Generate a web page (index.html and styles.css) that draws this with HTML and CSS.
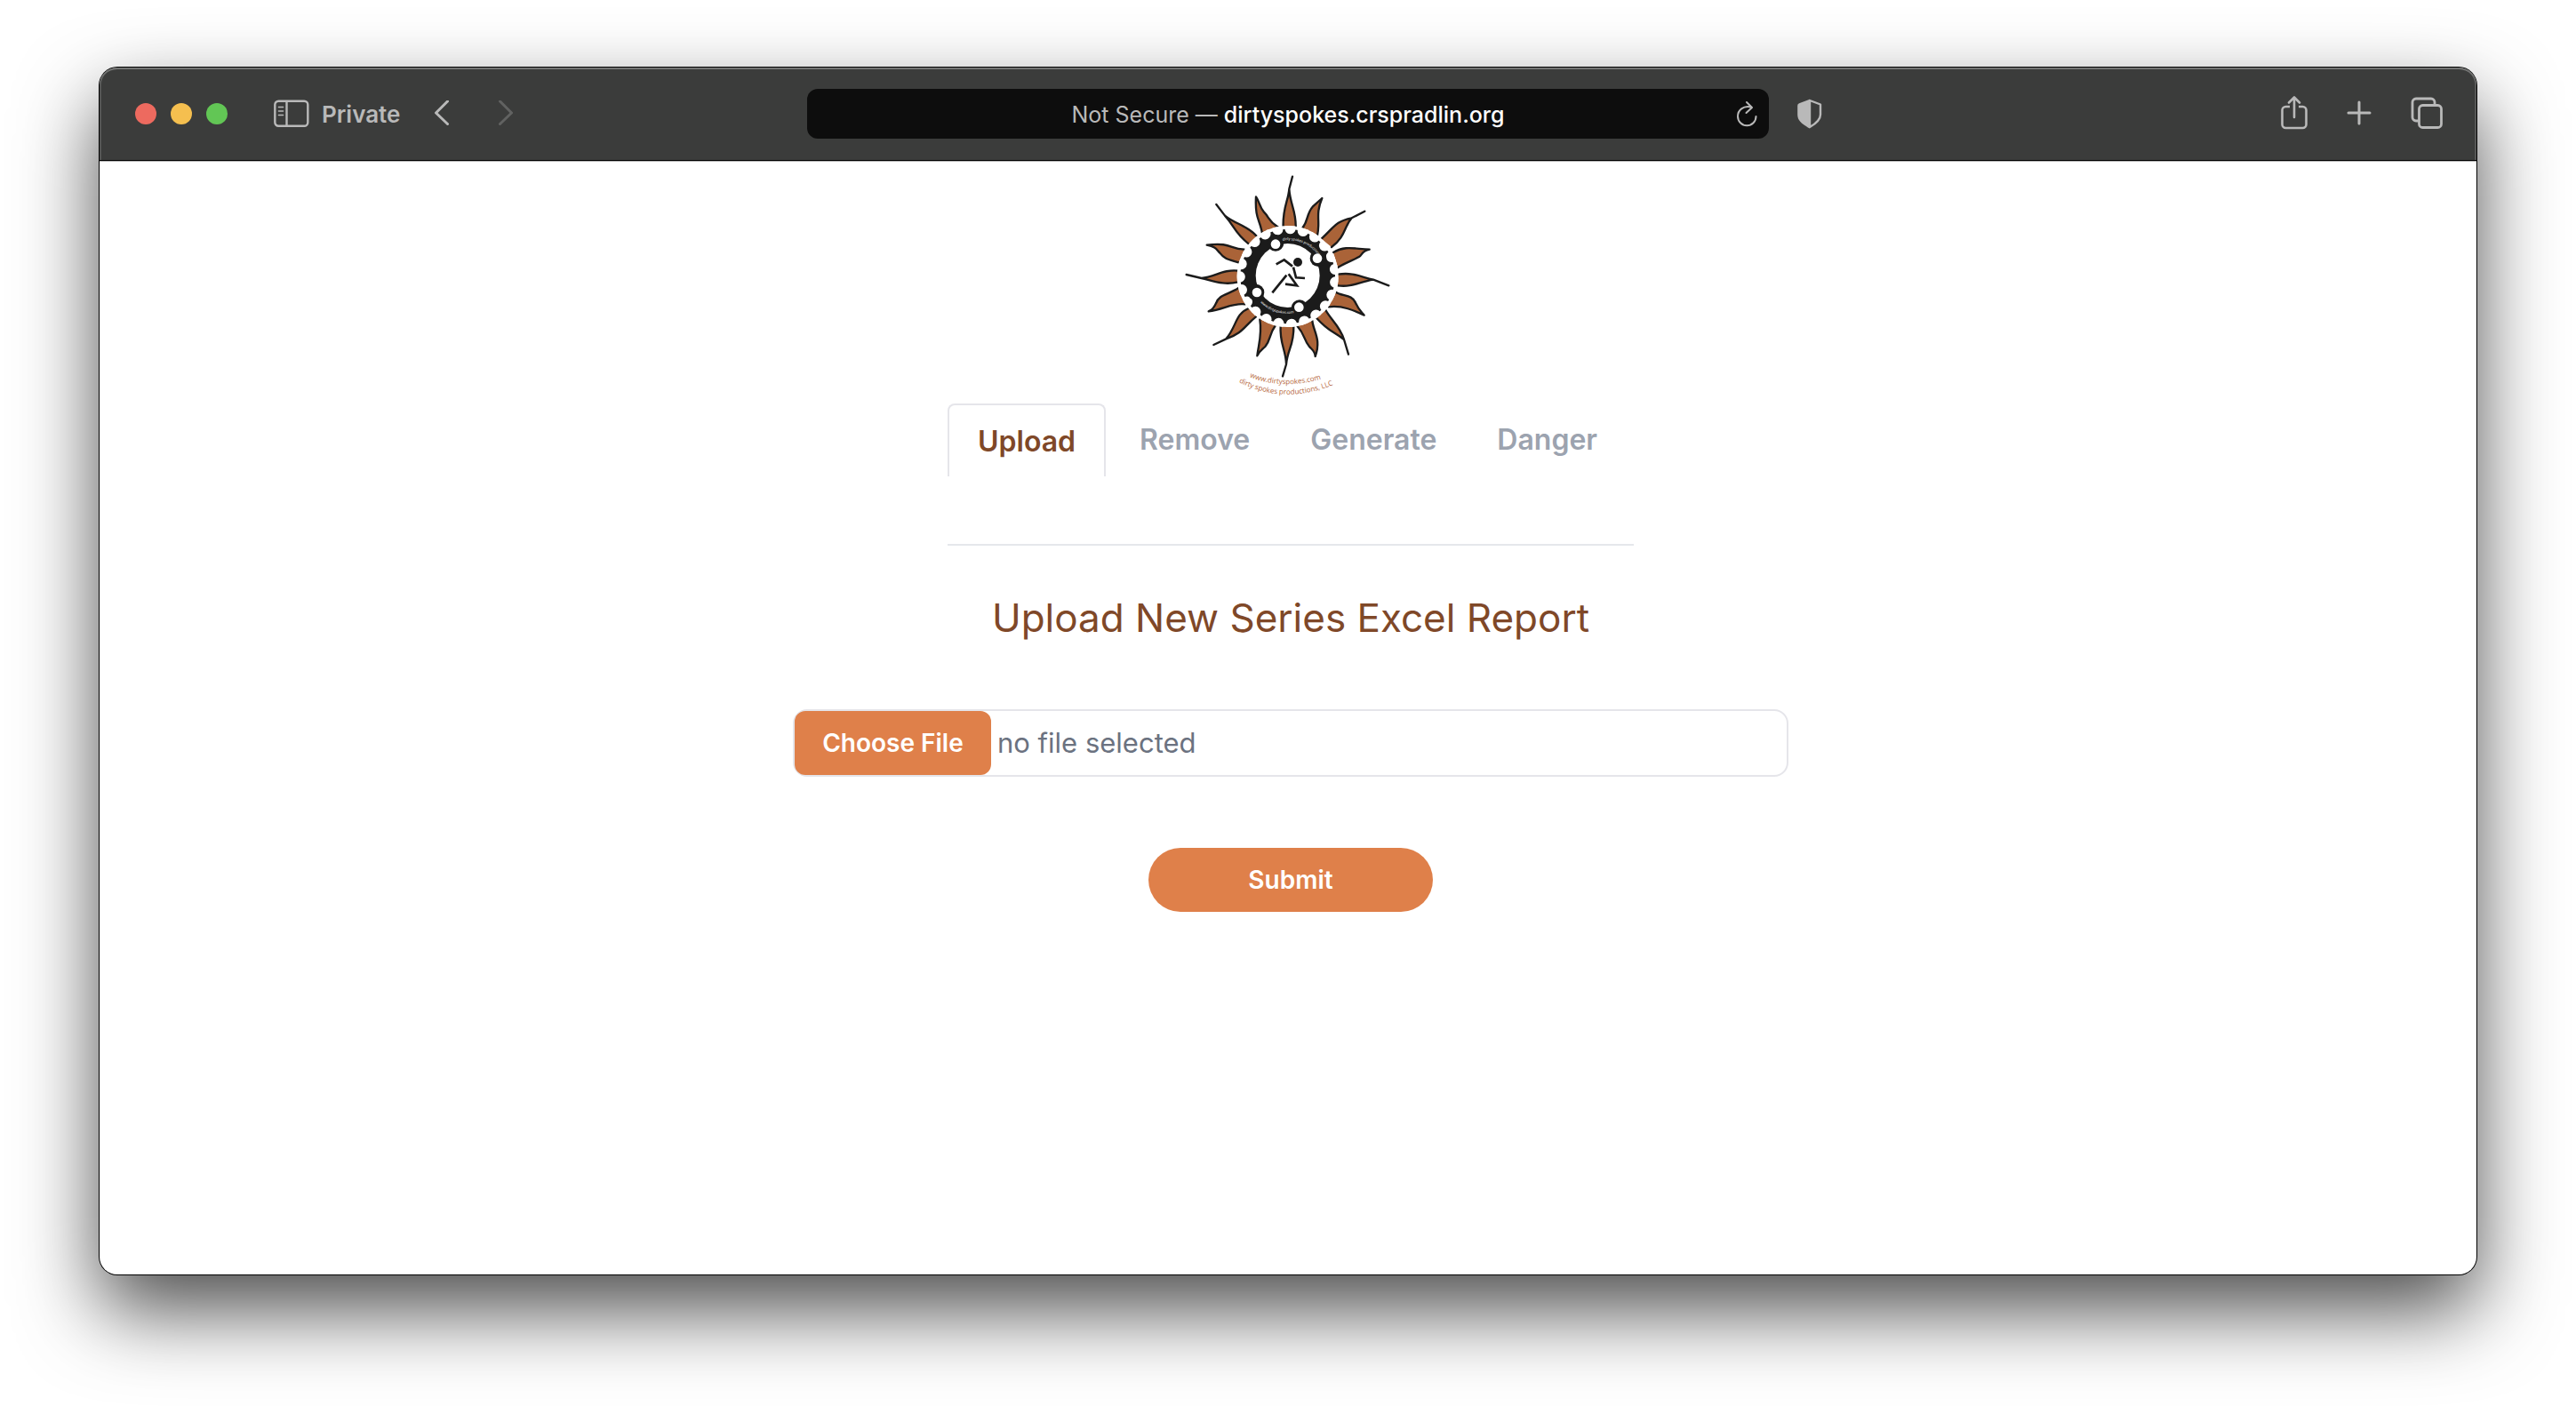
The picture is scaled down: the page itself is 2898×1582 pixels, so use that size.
FILE: index.html
```html
<!DOCTYPE html>
<html lang="en">
<head>
<meta charset="utf-8">
<title>Dirty Spokes – Upload</title>
<link rel="stylesheet" href="styles.css">
</head>
<body>
<div class="window">
  <header class="toolbar">
    <div class="toolbar-side">
      <div class="lights">
        <button class="light light-close" aria-label="Close"></button>
        <button class="light light-minimize" aria-label="Minimize"></button>
        <button class="light light-zoom" aria-label="Zoom"></button>
      </div>
      <button class="private">
        <svg width="40" height="32" viewBox="0 0 40 32" fill="none" stroke="currentColor" stroke-width="2.4">
          <rect x="1.3" y="1.8" width="37" height="28" rx="4"/>
          <path d="M14.5 2v28"/>
          <path d="M5.500 8.500h5M5.500 13h5M5.500 17.500h5" stroke-width="1.600" stroke-linecap="round"/>
        </svg>
        <span>Private</span>
      </button>
      <button class="icon" aria-label="Back">
        <svg width="18" height="30" viewBox="0 0 18 30" fill="none" stroke="currentColor" stroke-width="3" stroke-linecap="round" stroke-linejoin="round"><path d="M15.500 1L2.500 14l13 12.500"/></svg>
      </button>
      <button class="icon icon-forward" aria-label="Forward" disabled>
        <svg width="18" height="30" viewBox="0 0 18 30" fill="none" stroke="currentColor" stroke-width="3" stroke-linecap="round" stroke-linejoin="round"><path d="M2.500 1l13 13-13 12.500"/></svg>
      </button>
    </div>
    <div class="address">
      <p class="address-text">Not Secure — <span class="host">dirtyspokes.crspradlin.org</span></p>
      <button class="icon reload" aria-label="Reload">
        <svg width="24" height="30" viewBox="0 0 24 30" fill="none" stroke="currentColor" stroke-width="2" stroke-linecap="round" stroke-linejoin="round"><path d="M16 7.500C7 5.500 1 11 1 18a10 10 0 0 0 20.500 0M11 2l6 6-6.500 6"/></svg>
      </button>
    </div>
    <div class="toolbar-side">
      <button class="icon shield" aria-label="Privacy Report">
        <svg width="30" height="34" viewBox="0 0 30 34"><path d="M15 2L27 6.500V18c0 6-5 10-12 14z" fill="none" stroke="currentColor" stroke-width="2.400" stroke-linejoin="round"/><path d="M15 .8L3 5.200Q1.200 6 1.200 8v10c0 7 5.500 11 13.800 15.500z" fill="currentColor"/></svg>
      </button>
      <div class="actions">
        <button class="icon" aria-label="Share">
          <svg width="30" height="38" viewBox="0 0 30 38" fill="none" stroke="currentColor" stroke-width="2.600" stroke-linecap="round" stroke-linejoin="round"><path d="M10 12H5.500a4 4 0 0 0-4 4v16a4 4 0 0 0 4 4h19a4 4 0 0 0 4-4V16a4 4 0 0 0-4-4H20" stroke-linecap="butt"/><path d="M15 24V2M9 7.500L15 1.500l6 6"/></svg>
        </button>
        <button class="icon" aria-label="New Tab">
          <svg width="28" height="28" viewBox="0 0 28 28" stroke="currentColor" stroke-width="3" stroke-linecap="round"><path d="M14 2v24M2 14h24"/></svg>
        </button>
        <button class="icon" aria-label="Show Tabs">
          <svg width="36" height="36" viewBox="0 0 36 36" fill="none" stroke="currentColor" stroke-width="2.800"><rect x="9.500" y="9.500" width="25" height="25" rx="4"/><path d="M9.500 27H6a4 4 0 0 1-4-4V6a4 4 0 0 1 4-4h17a4 4 0 0 1 4 4v3.500"/></svg>
        </button>
      </div>
    </div>
  </header>

  <main class="page">
    <svg class="logo" viewBox="0 6 840 816" role="img" aria-label="Dirty Spokes Productions">
      <clipPath id="hub"><circle cx="416" cy="393" r="171"/></clipPath>
      <g fill="#aa6338" stroke="#1b1b1b" stroke-width="7" stroke-linejoin="round" stroke-linecap="round">
        <path d="M401 230C398 160 418 140 421 98L432 56 421 98C424 150 446 175 443 230"/>
        <path d="M464 232C487 205 478 183 500 158L532 129C508 185 527 205 516 254"/>
        <path d="M530 266C575 225 575 208 632 196L676 173 632 196C606 225 612 258 564 294"/>
        <path d="M570 312C610 288 640 300 692 302C665 308 668 320 658 326C640 337 615 345 585 363"/>
        <path d="M585 386C640 378 665 396 705 404L757 424 705 404C655 412 635 430 585 424"/>
        <path d="M574 444C600 462 632 452 645 482C655 505 662 510 674 524C640 508 600 490 555 496"/>
        <path d="M543 505C560 538 592 560 606 606L621 656 606 606C570 578 555 580 513 533"/>
        <path d="M499 543C503 580 530 605 509 663C508 645 498 640 489 630C470 608 475 590 448 560"/>
        <path d="M392 560C388 620 410 640 411 690L399 730 411 690C415 640 438 625 436 560"/>
        <path d="M322 538C330 590 318 620 313 661C320 645 330 640 340 630C360 605 352 590 375 558"/>
        <path d="M284 501C238 520 245 560 208 604L166 624 208 604C265 585 270 560 309 529"/>
        <path d="M250 432C215 455 182 455 174 484C165 503 160 505 149 511C200 505 228 482 272 487"/>
        <path d="M248 374C200 368 170 395 125 399L74 387 125 399C165 408 200 424 248 412"/>
        <path d="M269 302C220 302 228 277 143 287C175 293 175 302 187 314C203 335 215 335 253 347"/>
        <path d="M285 284C235 245 238 225 204 188L175 150 204 188C240 218 280 220 312 258"/>
        <path d="M330 248C322 200 305 200 309 124C322 143 320 158 336 176C355 195 352 208 385 228"/>
      </g>
      <circle cx="416" cy="393" r="171" fill="#fff"/>
      <circle cx="416" cy="393" r="160" fill="#1b1b1b"/>
      <g clip-path="url(#hub)">
        <circle cx="416" cy="393" r="162" fill="none" stroke="#fff" stroke-width="37" stroke-linecap="round" pathLength="23" stroke-dasharray="0 1" transform="rotate(-87 416 393)"/>
      </g>
      <circle cx="416" cy="390" r="108" fill="#fff"/>
      <g fill="#1b1b1b"><circle cx="375" cy="280" r="28"/><circle cx="519" cy="332" r="28"/><circle cx="456" cy="500" r="28"/><circle cx="309" cy="447" r="28"/></g>
      <g fill="#fff"><circle cx="375" cy="284" r="16"/><circle cx="516" cy="332" r="16"/><circle cx="454" cy="497" r="16"/><circle cx="312" cy="447" r="16"/></g>
      <circle cx="450" cy="345" r="15" fill="#1b1b1b"/>
      <path d="M377 352L404 337 432 359M435 362L444 397 474 399M364 448L412 389M419 385L447 424 408 419" fill="none" stroke="#1b1b1b" stroke-width="8"/>
      <path id="ring-top" d="M399 272A122 122 0 0 1 530 340" fill="none"/>
      <path id="ring-bottom" d="M324 481A126 126 0 0 0 440 516" fill="none"/>
      <path id="site" d="M287 733Q410 780 550 733" fill="none"/>
      <path id="company" d="M251 750Q410 832 590 750" fill="none"/>
      <g class="ring-text"><text><textPath href="#ring-top">dirty spokes productions</textPath></text><text><textPath href="#ring-bottom">www.dirtyspokes.com</textPath></text></g>
      <g class="logo-text"><text><textPath href="#site">www.dirtyspokes.com</textPath></text><text><textPath href="#company">dirty spokes productions, LLC</textPath></text></g>
    </svg>

    <nav class="tabs">
      <a class="tab tab-active" href="#upload" aria-current="page">Upload</a>
      <a class="tab" href="#remove">Remove</a>
      <a class="tab" href="#generate">Generate</a>
      <a class="tab" href="#danger">Danger</a>
    </nav>

    <form class="upload" id="upload">
      <h1 class="title">Upload New Series Excel Report</h1>
      <div class="file">
        <input class="file-input" id="report" type="file">
        <label class="file-name" for="report">no file selected</label>
      </div>
      <button class="submit" type="submit">Submit</button>
    </form>
  </main>
</div>
</body>
</html>
```
FILE: styles.css
```css
* {
  box-sizing: border-box;
}

body {
  margin: 0;
  padding: 76px 112px 148px;
  min-height: 100vh;
  display: flex;
  background: #fff;
  font-family: Inter, "Liberation Sans", sans-serif;
}

button {
  border: 0;
  padding: 0;
  background: none;
  color: inherit;
  font: inherit;
}

svg {
  display: block;
}

.window {
  flex: 1;
  display: flex;
  flex-direction: column;
  border-radius: 20px;
  background: #fff;
  box-shadow: 0 0 0 1px #000, 0 40px 90px rgba(0, 0, 0, 0.7);
}

/* Browser toolbar */
.toolbar {
  display: grid;
  grid-template-columns: 1fr 1082px 1fr;
  align-items: center;
  height: 105px;
  border-bottom: 1px solid #000;
  border-radius: 20px 20px 0 0;
  background: #3b3c3b;
  box-shadow: inset 0 2px 0 #737473, inset 2px 0 0 #555655, inset -2px 0 0 #555655, 0 1px 0 #b5b5b5;
  color: #b9b9b9;
}

.toolbar-side {
  display: flex;
  align-items: center;
}

.lights {
  display: flex;
  gap: 16px;
  margin: 0 52px 0 40px;
}

.light {
  width: 24px;
  height: 24px;
  border-radius: 50%;
}

.light-close { background: #ed6a5f; }
.light-minimize { background: #f5bf4f; }
.light-zoom { background: #62c655; }

.private {
  display: flex;
  align-items: center;
  gap: 14px;
  margin-right: 38px;
  font-size: 26px;
  font-weight: 600;
}

.icon-forward {
  margin-left: 54px;
  color: #616261;
}

.address {
  display: grid;
  grid-template-columns: 36px 1fr 36px;
  align-items: center;
  height: 56px;
  border-radius: 12px;
  background: #0d0d0d;
}

.address-text {
  grid-column: 2;
  margin: 0;
  padding-top: 2px;
  text-align: center;
  font-size: 25px;
  line-height: 32px;
  color: #b9b9b9;
}

.host {
  color: #fff;
  font-weight: 500;
}

.shield {
  margin-left: 31px;
}

.actions {
  display: flex;
  align-items: center;
  gap: 44px;
  margin-left: auto;
  padding: 0 38px 3px 0;
}

/* Page */
.page {
  display: flex;
  flex-direction: column;
  align-items: center;
  padding-top: 1px;
}

.logo {
  width: 280px;
  height: 272px;
  margin-left: 2px;
}

.ring-text {
  fill: #fff;
  font: 12px "Open Sans", sans-serif;
}

.logo-text {
  fill: #b5653a;
  font: 24px "Open Sans", sans-serif;
}

.tabs {
  display: flex;
  width: 772px;
  height: 160px;
  margin-left: 6px;
  border-bottom: 2px solid #e5e7eb;
}

.tab {
  height: 82px;
  padding: 21px 34px;
  font-size: 32px;
  font-weight: 600;
  line-height: 40px;
  color: #9ca3af;
  text-decoration: none;
}

.tab-active {
  margin-right: 4px;
  padding: 21px 32px;
  border: 2px solid #e5e5ea;
  border-bottom: 0;
  border-radius: 8px 8px 0 0;
  color: #7f4828;
}

.upload {
  display: flex;
  flex-direction: column;
  align-items: center;
  width: 1120px;
  margin-left: 6px;
}

.title {
  margin: 51px 0 53px;
  font-size: 44px;
  font-weight: 400;
  line-height: 60px;
  color: #7f4828;
}

.file {
  display: flex;
  align-items: center;
  gap: 7px;
  width: 100%;
  margin: 20px 0 80px;
  border: 2px solid #e5e5ea;
  border-radius: 16px;
}

.file-input {
  width: 221px;
  height: 72px;
  overflow: hidden;
  color: transparent;
  font-family: inherit;
  font-size: 28px;
}

.file-input::file-selector-button {
  width: 221px;
  height: 72px;
  margin: 0;
  padding: 0;
  border: 0;
  border-radius: 12px;
  background: #df804a;
  color: #fff;
  font-family: inherit;
  font-size: 28px;
  font-weight: 600;
}

.file-name {
  font-size: 31px;
  line-height: 40px;
  color: #6b7280;
}

.submit {
  width: 320px;
  height: 72px;
  border-radius: 36px;
  background: #df804a;
  color: #fff;
  font-size: 28px;
  font-weight: 600;
}
```
